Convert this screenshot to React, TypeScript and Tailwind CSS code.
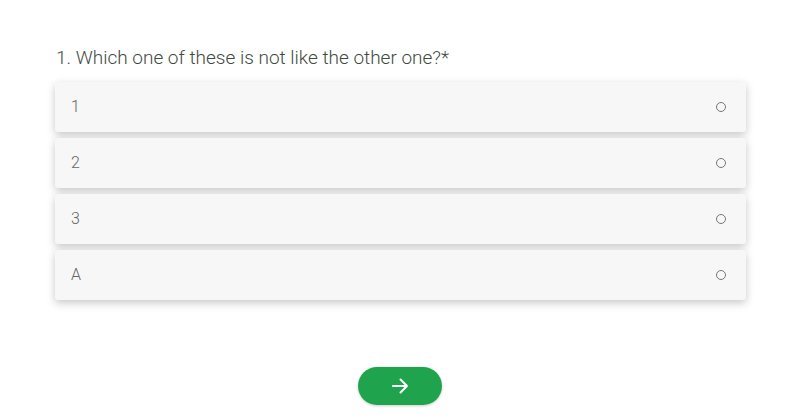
import React from "react";

const options = ["1", "2", "3", "A"];

export default function App() {
  return (
    <div
      className="w-[800px] h-[418px] bg-white overflow-hidden"
      style={{ fontFamily: "Roboto, 'Liberation Sans', sans-serif" }}
    >
      <div className="pl-[55px] pr-[54px] pt-[46px]">
        <h1 className="text-[19px] leading-[24px] font-light text-[#3f4a3f] pl-px">
          1. Which one of these is not like the other one?*
        </h1>
        <div className="mt-[12px] flex flex-col gap-[6px]">
          {options.map((o) => (
            <div
              key={o}
              className="h-[50px] rounded-[3px] bg-[#f7f7f7] shadow-[0_3px_8px_rgba(0,0,0,0.22)] flex items-center justify-between pl-[16px] pr-[20px]"
            >
              <span className="text-[16px] font-light text-[#666]">{o}</span>
              <span className="w-[10px] h-[10px] rounded-full border border-[#777]" />
            </div>
          ))}
        </div>
      </div>
      <div className="flex justify-center mt-[67px]">
        <button className="w-[84px] h-[38px] rounded-full bg-[#1fa34c] flex items-center justify-center shadow-[0_1px_3px_rgba(0,0,0,0.2)]">
          <svg width="18" height="16" viewBox="0 0 18 16" fill="none" stroke="white" strokeWidth="2" strokeLinecap="round" strokeLinejoin="round">
            <path d="M2 8h14M9.5 1.5L16 8l-6.5 6.5" />
          </svg>
        </button>
      </div>
    </div>
  );
}
